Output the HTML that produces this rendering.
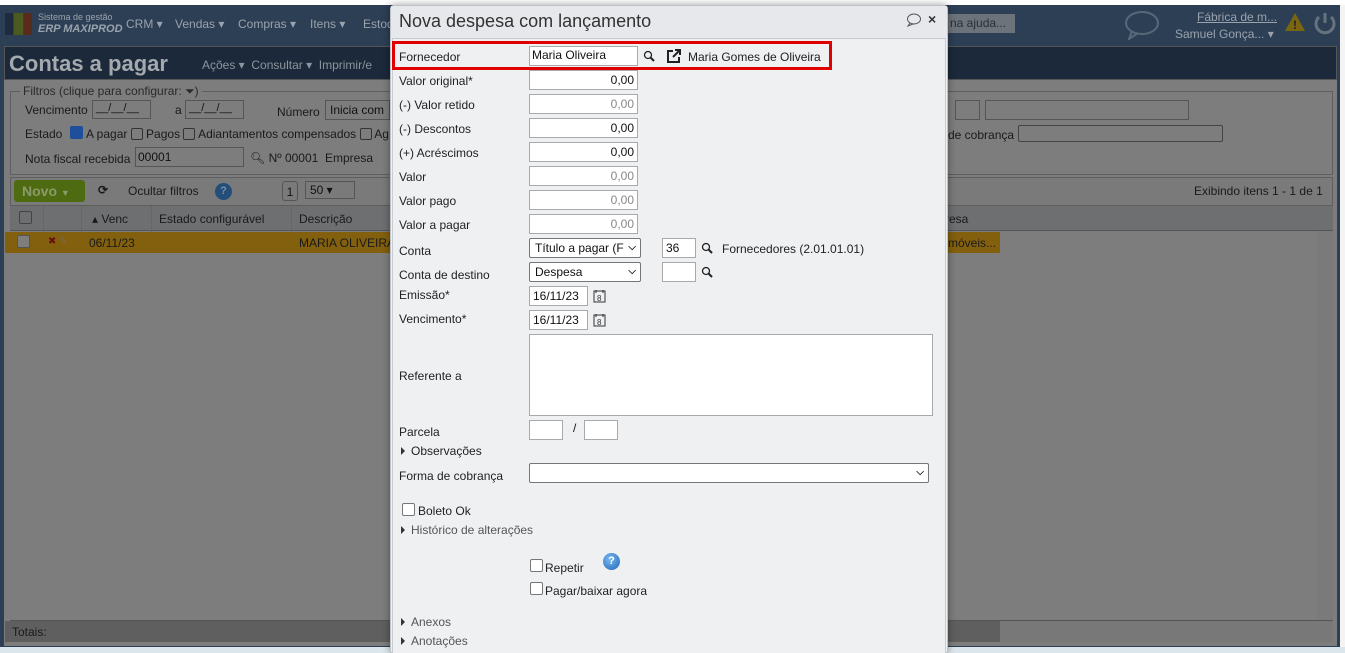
<!DOCTYPE html>
<html><head><meta charset="utf-8"><style>
*{box-sizing:border-box}
body{margin:0;width:1345px;height:653px;overflow:hidden;position:relative;background:#fff;font-family:"Liberation Sans",Arial,sans-serif;font-size:12px;color:#111}
.a{position:absolute}
.dim{color:#1a1a1a}
.nav{position:absolute;top:17px;font-size:12px;color:#9aa3ad;white-space:nowrap}
.in{position:absolute;background:#fff;border:1px solid #a9a9a9;height:20px;font-size:12px;padding:2px 3px;white-space:nowrap;overflow:hidden}
.r{text-align:right}
.lbl{position:absolute;left:9px;font-size:12px;color:#222}
.sel{position:absolute;background:#fff;border:1px solid #767676;border-radius:2px;height:20px;padding:2px 5px;font-size:12px;overflow:hidden;white-space:nowrap}
.chev{position:absolute;right:4px;top:3px;font-size:10px;font-weight:bold}
.cb{position:absolute;width:13px;height:13px;border:1px solid #767676;border-radius:2px;background:#fff}
.tri{display:inline-block;width:0;height:0;border-top:4px solid transparent;border-bottom:4px solid transparent;border-left:4px solid #333;margin-right:6px;vertical-align:0}
</style></head><body>
<div class="a" style="left:0;top:0;width:1345px;height:5px;background:#fff"></div>
<div class="a" style="left:0;top:5px;width:1340px;height:642px;background:#2d3f55"></div>
<div class="a" style="left:1340px;top:5px;width:5px;height:648px;background:#f4f4f4"></div>
<div class="a" style="left:5px;top:13px;width:8px;height:22px;background:#1e2c3d"></div>
<div class="a" style="left:14px;top:13px;width:9px;height:22px;background:#4a5a20"></div>
<div class="a" style="left:24px;top:13px;width:8px;height:22px;background:#5a2a1a"></div>
<div class="a" style="left:38px;top:12px;font-size:9px;color:#9aa3ad">Sistema de gestão</div>
<div class="a" style="left:38px;top:23px;font-size:11px;color:#9aa3ad;font-weight:bold;font-style:italic">ERP MAXIPROD</div>
<div class="nav" style="left:126px">CRM ▾</div>
<div class="nav" style="left:175px">Vendas ▾</div>
<div class="nav" style="left:238px">Compras ▾</div>
<div class="nav" style="left:310px">Itens ▾</div>
<div class="nav" style="left:363px">Estoq</div>
<div class="a" style="left:948px;top:14px;width:67px;height:19px;background:#6d737a;color:#2a2f35;font-size:12px;padding:2px 2px">na ajuda...</div>
<svg class="a" style="left:1122px;top:10px" width="40" height="30"><ellipse cx="20" cy="13" rx="16" ry="11" fill="none" stroke="#58687a" stroke-width="2"/><path d="M10 21 L7 29 L16 23" fill="none" stroke="#58687a" stroke-width="2"/></svg>
<div class="a" style="left:1197px;top:10px;font-size:12px;color:#9aa3ad;text-decoration:underline">Fábrica de m...</div>
<div class="a" style="left:1175px;top:27px;font-size:12px;color:#9aa3ad">Samuel Gonça... ▾</div>
<svg class="a" style="left:1284px;top:12px" width="22" height="20"><path d="M11 1 L21 19 L1 19Z" fill="#7a6510"/><text x="9" y="17" font-size="12" font-weight="bold" fill="#222">!</text></svg>
<svg class="a" style="left:1312px;top:10px" width="26" height="26"><path d="M7 7 A9 9 0 1 0 19 7" fill="none" stroke="#66737f" stroke-width="3"/><path d="M13 3 V13" stroke="#66737f" stroke-width="3"/></svg>
<div class="a" style="left:4px;top:46px;width:1333px;height:34px;background:#1b293a;border:1px solid #555"></div>
<div class="a" style="left:9px;top:51px;font-size:22px;font-weight:bold;color:#a4a9ae">Contas a pagar</div>
<div class="a" style="left:202px;top:58px;font-size:12px;color:#8c949d;white-space:nowrap">Ações ▾ &nbsp;Consultar ▾ &nbsp;Imprimir/e</div>
<div class="a" style="left:4px;top:80px;width:1333px;height:566px;background:#7d7d7d"></div>
<div class="a" style="left:10px;top:91px;width:1323px;height:84px;border:1px solid #5e5e5e"></div>
<div class="a" style="left:20px;top:84px;background:#7d7d7d;padding:0 3px;font-size:12px;color:#2a2a2a">Filtros (clique para configurar: ⏷)</div>
<div class="a dim" style="left:25px;top:103px">Vencimento</div>
<div class="a" style="left:92px;top:100px;width:59px;height:19px;border:1px solid #555;font-size:11px;padding:1px 3px">__/__/__</div>
<div class="a dim" style="left:175px;top:103px">a</div>
<div class="a" style="left:185px;top:100px;width:59px;height:19px;border:1px solid #555;font-size:11px;padding:1px 3px">__/__/__</div>
<div class="a dim" style="left:277px;top:105px">Número</div>
<div class="a" style="left:325px;top:100px;width:65px;height:20px;border:1px solid #555;padding:2px 4px">Inicia com</div>
<div class="a" style="left:955px;top:100px;width:25px;height:20px;border:1px solid #555"></div>
<div class="a" style="left:985px;top:100px;width:204px;height:20px;border:1px solid #555"></div>
<div class="a dim" style="left:25px;top:127px">Estado</div>
<div class="a" style="left:70px;top:126px;width:13px;height:13px;background:#1f4f9a;border-radius:2px"></div>
<div class="a dim" style="left:86px;top:127px;white-space:nowrap">A pagar <span style="display:inline-block;width:12px;height:12px;border:1px solid #333;border-radius:2px;vertical-align:-2px"></span> Pagos <span style="display:inline-block;width:12px;height:12px;border:1px solid #333;border-radius:2px;vertical-align:-2px"></span> Adiantamentos compensados <span style="display:inline-block;width:12px;height:12px;border:1px solid #333;border-radius:2px;vertical-align:-2px"></span> Ag</div>
<div class="a dim" style="left:948px;top:128px">de cobrança</div>
<div class="a" style="left:1018px;top:125px;width:205px;height:17px;border:1px solid #444;border-radius:2px"></div>
<div class="a dim" style="left:25px;top:152px">Nota fiscal recebida</div>
<div class="a" style="left:135px;top:147px;width:109px;height:20px;border:1px solid #555;padding:2px 2px">00001</div>
<div class="a dim" style="left:250px;top:151px;white-space:nowrap">🔍︎ Nº 00001 &nbsp;Empresa</div>
<div class="a" style="left:10px;top:177px;width:1323px;height:29px;border:1px solid #5e5e5e;background:#7a7a7a"></div>
<div class="a" style="left:14px;top:180px;width:71px;height:22px;background:#4f6b12;border-radius:3px;color:#8a9a6a;font-weight:bold;font-size:14px;padding:3px 8px">Novo <span style="font-size:9px">▼</span></div>
<div class="a dim" style="left:98px;top:183px;font-weight:bold">⟳</div>
<div class="a dim" style="left:128px;top:184px">Ocultar filtros</div>
<div class="a" style="left:215px;top:183px;width:17px;height:17px;border-radius:50%;background:#244e7a;color:#7d8fa5;font-weight:bold;font-size:11px;text-align:center;line-height:17px">?</div>
<div class="a" style="left:282px;top:181px;width:16px;height:20px;border:1px solid #555;border-radius:3px;text-align:center;padding-top:3px">1</div>
<div class="a" style="left:305px;top:181px;width:50px;height:18px;border:1px solid #555;padding:1px 4px">50 ▾</div>
<div class="a dim" style="left:1194px;top:184px">Exibindo itens 1 - 1 de 1</div>
<div class="a" style="left:10px;top:206px;width:1323px;height:25px;background:#6e6f71;border-bottom:1px solid #555"></div>
<div class="a" style="left:19px;top:211px;width:13px;height:13px;border:1px solid #444;border-radius:2px"></div>
<div class="a dim" style="left:92px;top:212px">▴ Venc</div>
<div class="a dim" style="left:159px;top:212px">Estado configurável</div>
<div class="a dim" style="left:299px;top:212px">Descrição</div>
<div class="a dim" style="left:945px;top:212px">resa</div>
<div class="a" style="left:43px;top:206px;width:1px;height:47px;background:#666"></div>
<div class="a" style="left:81px;top:206px;width:1px;height:47px;background:#666"></div>
<div class="a" style="left:151px;top:206px;width:1px;height:47px;background:#666"></div>
<div class="a" style="left:291px;top:206px;width:1px;height:47px;background:#666"></div>
<div class="a" style="left:5px;top:232px;width:995px;height:21px;background:#83600d"></div>
<div class="a" style="left:17px;top:235px;width:13px;height:13px;border:1px solid #555;border-radius:2px;background:#7e7e7e"></div>
<div class="a" style="left:48px;top:236px;color:#6a0f0f;font-size:10px">✖ <span style="color:#7a6a55">✎</span></div>
<div class="a dim" style="left:89px;top:236px">06/11/23</div>
<div class="a dim" style="left:299px;top:236px">MARIA OLIVEIRA</div>
<div class="a dim" style="left:948px;top:236px">móveis...</div>
<div class="a" style="left:1317px;top:231px;width:16px;height:389px;background:#7a7a7a"></div>
<div class="a" style="left:10px;top:620px;width:1323px;height:22px;background:#787878;border-top:1px solid #555"></div>
<div class="a" style="left:5px;top:621px;width:995px;height:21px;background:#5f5f5f"></div>
<div class="a dim" style="left:12px;top:625px">Totais:</div>
<div class="a" style="left:0;top:647px;width:1345px;height:6px;background:#dbe6ec"></div>

<div class="a" style="left:390px;top:5px;width:558px;height:648px;background:#eff0f2;border:1px solid #bfc3c8;border-radius:4px 4px 0 0;box-shadow:0 0 8px rgba(0,0,0,.4)"></div>
<div class="a" style="left:391px;top:6px;width:556px;height:32px;background:#e6e8eb"></div>
<div class="a" style="left:399px;top:11px;font-size:18px;color:#333">Nova despesa com lançamento</div>
<svg class="a" style="left:906px;top:13px" width="16" height="14"><ellipse cx="8" cy="6" rx="6.5" ry="5" fill="none" stroke="#555" stroke-width="1"/><path d="M4 10 L2 13 L7 11" fill="none" stroke="#555"/></svg>
<div class="a" style="left:928px;top:11px;font-size:14px;font-weight:bold;color:#333">×</div>
<div class="a" style="left:392px;top:38px;width:554px;height:615px;border:1px solid #c8ccd0;border-bottom:none;background:#eff0f2"></div>

<div class="a" style="left:392px;top:41px;width:440px;height:29px;border:3px solid #e00000"></div>
<div class="lbl" style="left:399px;top:50px">Fornecedor</div>
<div class="in" style="left:529px;top:46px;width:109px;padding:1px 2px">Maria Oliveira</div>
<svg class="a" style="left:643px;top:50px" width="12" height="12"><circle cx="5" cy="5" r="3.5" fill="none" stroke="#222" stroke-width="1.3"/><path d="M7.5 7.5 L11 11" stroke="#222" stroke-width="2"/></svg>
<svg class="a" style="left:666px;top:48px" width="16" height="16"><path d="M7 3 H2 V14 H13 V9" fill="none" stroke="#222" stroke-width="2"/><path d="M7 9 L14 2 M9 2 H14 V7" fill="none" stroke="#222" stroke-width="2"/></svg>
<div class="a" style="left:688px;top:50px;color:#222">Maria Gomes de Oliveira</div>

<div class="lbl" style="left:399px;top:74px">Valor original*</div>
<div class="in r" style="left:529px;top:70px;width:109px">0,00</div>
<div class="lbl" style="left:399px;top:98px">(-) Valor retido</div>
<div class="in r" style="left:529px;top:94px;width:109px;color:#888">0,00</div>
<div class="lbl" style="left:399px;top:122px">(-) Descontos</div>
<div class="in r" style="left:529px;top:118px;width:109px">0,00</div>
<div class="lbl" style="left:399px;top:146px">(+) Acréscimos</div>
<div class="in r" style="left:529px;top:142px;width:109px">0,00</div>
<div class="lbl" style="left:399px;top:170px">Valor</div>
<div class="in r" style="left:529px;top:166px;width:109px;color:#888">0,00</div>
<div class="lbl" style="left:399px;top:194px">Valor pago</div>
<div class="in r" style="left:529px;top:190px;width:109px;color:#888">0,00</div>
<div class="lbl" style="left:399px;top:218px">Valor a pagar</div>
<div class="in r" style="left:529px;top:214px;width:109px;color:#888">0,00</div>

<div class="lbl" style="left:399px;top:244px">Conta</div>
<div class="sel" style="left:529px;top:238px;width:112px">Título a pagar (F<span class="chev">⌵</span></div>
<div class="in" style="left:662px;top:238px;width:34px">36</div>
<svg class="a" style="left:701px;top:242px" width="12" height="12"><circle cx="5" cy="5" r="3.5" fill="none" stroke="#222" stroke-width="1.3"/><path d="M7.5 7.5 L11 11" stroke="#222" stroke-width="2"/></svg>
<div class="a" style="left:722px;top:242px;color:#222">Fornecedores (2.01.01.01)</div>
<div class="lbl" style="left:399px;top:268px">Conta de destino</div>
<div class="sel" style="left:529px;top:262px;width:112px">Despesa<span class="chev">⌵</span></div>
<div class="in" style="left:662px;top:262px;width:34px"></div>
<svg class="a" style="left:701px;top:266px" width="12" height="12"><circle cx="5" cy="5" r="3.5" fill="none" stroke="#222" stroke-width="1.3"/><path d="M7.5 7.5 L11 11" stroke="#222" stroke-width="2"/></svg>

<div class="lbl" style="left:399px;top:288px">Emissão*</div>
<div class="in" style="left:529px;top:286px;width:59px">16/11/23</div>
<svg class="a" style="left:593px;top:289px" width="13" height="14"><rect x="1" y="2" width="11" height="11" fill="none" stroke="#333"/><path d="M3 1 V4 M10 1 V4" stroke="#333"/><text x="4" y="12" font-size="8" fill="#333">8</text></svg>
<div class="lbl" style="left:399px;top:312px">Vencimento*</div>
<div class="in" style="left:529px;top:310px;width:59px">16/11/23</div>
<svg class="a" style="left:593px;top:313px" width="13" height="14"><rect x="1" y="2" width="11" height="11" fill="none" stroke="#333"/><path d="M3 1 V4 M10 1 V4" stroke="#333"/><text x="4" y="12" font-size="8" fill="#333">8</text></svg>

<div class="lbl" style="left:399px;top:369px">Referente a</div>
<div class="a" style="left:529px;top:334px;width:404px;height:82px;background:#fff;border:1px solid #a9a9a9"></div>

<div class="lbl" style="left:399px;top:425px">Parcela</div>
<div class="in" style="left:529px;top:420px;width:34px"></div>
<div class="a" style="left:573px;top:421px">/</div>
<div class="in" style="left:584px;top:420px;width:34px"></div>
<div class="a" style="left:401px;top:444px;color:#222"><span class="tri"></span>Observações</div>

<div class="lbl" style="left:399px;top:469px">Forma de cobrança</div>
<div class="sel" style="left:529px;top:463px;width:400px"><span class="chev">⌵</span></div>

<div class="cb" style="left:402px;top:503px"></div>
<div class="a" style="left:418px;top:504px;color:#222">Boleto Ok</div>
<div class="a" style="left:401px;top:523px;color:#555"><span class="tri"></span>Histórico de alterações</div>

<div class="cb" style="left:530px;top:559px"></div>
<div class="a" style="left:545px;top:561px;color:#222">Repetir</div>
<div class="a" style="left:603px;top:553px;width:17px;height:17px;border-radius:50%;background:radial-gradient(circle at 40% 35%,#7ab8f0,#1f66b8);color:#fff;font-weight:bold;font-size:11px;text-align:center;line-height:17px">?</div>
<div class="cb" style="left:530px;top:582px"></div>
<div class="a" style="left:545px;top:584px;color:#222">Pagar/baixar agora</div>

<div class="a" style="left:401px;top:615px;color:#555"><span class="tri"></span>Anexos</div>
<div class="a" style="left:401px;top:634px;color:#555"><span class="tri"></span>Anotações</div>
</body></html>
